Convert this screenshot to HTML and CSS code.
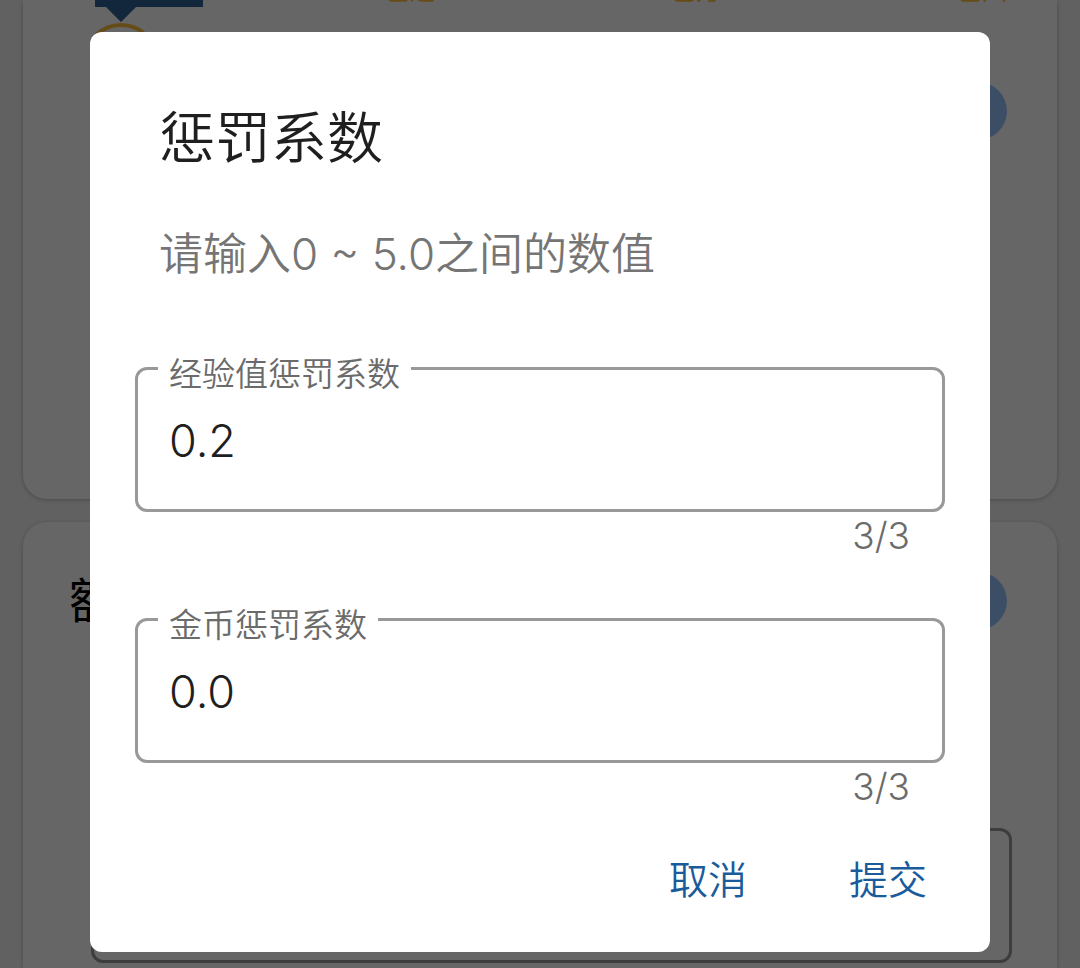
FILE: index.html
```html
<!DOCTYPE html>
<html lang="zh-CN">
<head>
<meta charset="utf-8">
<meta name="viewport" content="width=device-width, initial-scale=1">
<title>惩罚系数</title>
<link rel="stylesheet" href="styles.css">
</head>
<body>
<main class="page" inert>
  <section class="card card-progress">
    <div class="steps">
      <svg class="marker" width="108" height="98" viewBox="0 0 108 98" aria-hidden="true">
        <path d="M0 0H108V7H41L26 22L11 7H0Z" fill="#2f6196"/>
        <circle cx="26" cy="61" r="36" fill="none" stroke="#ffbe3c" stroke-width="4"/>
      </svg>
      <div class="step-list">
        <span class="step">已达</span>
        <span class="step">已万</span>
        <span class="step">已六</span>
      </div>
    </div>
    <div class="card-row"><span></span><button class="round" type="button" aria-label="添加"></button></div>
  </section>
  <section class="card card-extra">
    <div class="card-row"><h2 class="card-title">额外</h2><button class="round" type="button" aria-label="添加"></button></div>
    <input class="page-input" type="text" aria-label="额外">
  </section>
</main>
<div class="scrim">
  <form class="dialog" role="dialog" aria-modal="true" aria-labelledby="title">
    <h1 class="title" id="title">惩罚系数</h1>
    <p class="message">请输入0 ~ 5.0之间的数值</p>
    <div class="field">
      <fieldset class="outline">
        <legend class="legend"><label for="exp">经验值惩罚系数</label></legend>
        <input class="value" id="exp" type="text" inputmode="decimal" maxlength="3" value="0.2">
      </fieldset>
      <div class="counter">3/3</div>
    </div>
    <div class="field">
      <fieldset class="outline">
        <legend class="legend"><label for="coin">金币惩罚系数</label></legend>
        <input class="value" id="coin" type="text" inputmode="decimal" maxlength="3" value="0.0">
      </fieldset>
      <div class="counter">3/3</div>
    </div>
    <div class="actions">
      <button class="action" type="button">取消</button>
      <button class="action" type="submit">提交</button>
    </div>
  </form>
</div>
</body>
</html>
```
FILE: styles.css
```css
* { box-sizing: border-box; }
body {
  margin: 0;
  height: 100vh;
  overflow: hidden;
  background: #f3f3f3;
  color: #1f1f1f;
  font-family: Inter, "Noto Sans CJK SC", sans-serif;
  font-weight: 350;
}
button, input { font: inherit; color: inherit; }

.page { display: flex; flex-direction: column; gap: 23px; padding: 0 23px; }
.card {
  background: #fff;
  border-radius: 24px;
  box-shadow: 0 1px 4px rgba(0, 0, 0, .25);
}
.card-progress { height: 499px; border-radius: 0 0 24px 24px; overflow: hidden; }
.card-extra { height: 446px; padding-top: 50px; border-radius: 24px 24px 0 0; }
.steps { display: flex; height: 82px; padding: 0 50px 0 72px; justify-content: space-between; }
.marker { flex: none; }
.step-list { display: flex; gap: 236px; }
.step { color: #ffbe3c; font-size: 25px; line-height: 26px; font-weight: 400; margin-top: -22px; }
.card-row { display: flex; justify-content: space-between; align-items: center; padding: 0 50px 0 46px; }
.card-title { margin: 0; font-size: 48px; line-height: 58px; font-weight: 400; color: #000; }
.round { width: 58px; height: 58px; border: 0; border-radius: 50%; background: #96c3ff; }
.page-input {
  display: block;
  width: calc(100% - 113px);
  height: 135px;
  margin: 198px 45px 0 68px;
  border: 3px solid #999;
  border-radius: 12px;
  background: none;
}

.scrim {
  position: absolute;
  inset: 0;
  display: flex;
  align-items: flex-start;
  padding: 32px 90px 16px;
  background: rgba(0, 0, 0, .6);
}
.dialog {
  flex: 1;
  padding: 70px 45px 50px;
  border-radius: 12px;
  background: #fff;
}
.title { margin: 0 24px; font-size: 56px; line-height: 72px; font-weight: 350; }
.message { margin: 50px 24px 72px; font-size: 44px; line-height: 60px; color: #757575; }
.field { margin-bottom: 48px; }
.outline {
  min-width: 0;
  margin: 0;
  padding: 0 20px 9px;
  border: 3px solid #999;
  border-radius: 12px;
}
/* Shorter than its text, so the label sits slightly below the border line */
.legend { height: 24px; padding: 0 11px; font-size: 33px; line-height: 36px; color: #6b6b6b; }
.value {
  display: block;
  width: 100%;
  height: 120px;
  padding: 0 11px;
  border: 0;
  outline: 0;
  background: none;
  font-size: 45px;
  font-weight: 300;
}
.counter {
  padding-right: 35px;
  text-align: right;
  font-size: 37px;
  line-height: 47px;
  font-weight: 300;
  color: #6b6b6b;
}
.actions { display: flex; justify-content: flex-end; gap: 66px; }
.action {
  padding: 0 18px;
  border: 0;
  background: none;
  color: #1a5b9c;
  font-size: 39px;
  line-height: 44px;
}
```
